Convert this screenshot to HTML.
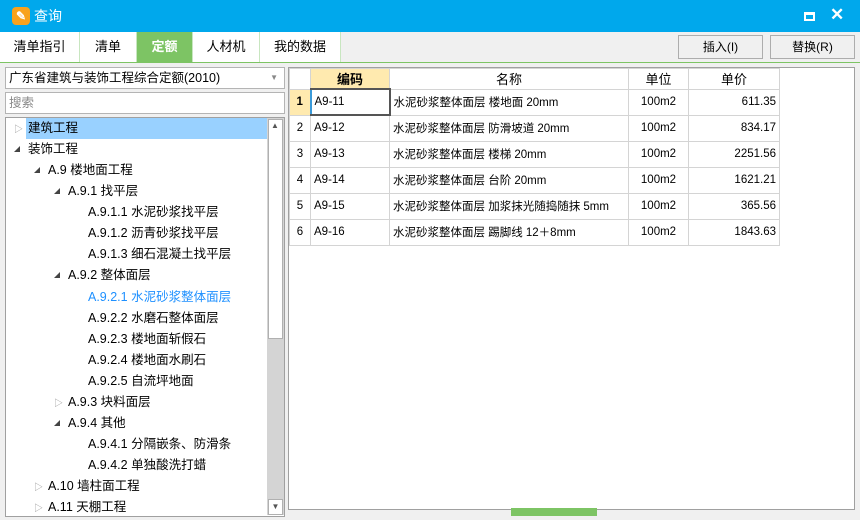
<!DOCTYPE html>
<html><head><meta charset="utf-8"><style>
*{margin:0;padding:0;box-sizing:border-box}
body{width:860px;height:520px;background:#f0f0f0;font-family:"Liberation Sans","Noto Sans CJK SC",sans-serif;font-size:12px;color:#000;position:relative;overflow:hidden}
.abs{position:absolute}
.title{left:0;top:0;width:860px;height:32px;background:#00a8ec}
.tab{top:32px;height:30px;line-height:30px;text-align:center;font-size:13px;background:#fff;border-right:1px solid #c8e6c0}
.btn{top:35px;height:24px;line-height:22px;text-align:center;border:1px solid #adadad;background:#f0f0f0;font-size:12px}
.tree div{position:absolute;height:21px;line-height:21px;font-size:12.5px;white-space:nowrap}
.tri{position:absolute;font-size:9px;color:#999}
.dtri{position:absolute;width:0;height:0;border-left:6px solid transparent;border-bottom:6px solid #444}
table{border-collapse:collapse;position:absolute;left:289px;top:68px;font-size:11.5px}
td{border:1px solid #d4d4d4;height:26px;padding:0 3px;background:#fff;white-space:nowrap}
th{border:1px solid #d4d4d4;height:20px;font-weight:normal;font-size:13px;background:#fff}
</style></head><body>
<div class="abs title"></div>
<div class="abs" style="left:12px;top:7px;width:18px;height:18px;background:#f8a21c;border-radius:4px;color:#fff;font-size:12px;line-height:18px;text-align:center;font-weight:bold">✎</div>
<div class="abs" style="left:34px;top:7px;color:#fff;font-size:14px;line-height:18px">查询</div>
<div class="abs" style="left:804px;top:12px;width:11px;height:9px;border:2px solid #fff;border-top-width:3px"></div>
<div class="abs" style="left:830px;top:5px;color:#fff;font-size:17px;font-weight:bold;line-height:20px">✕</div>

<div class="abs tab" style="left:0;width:80px">清单指引</div>
<div class="abs tab" style="left:80px;width:57px">清单</div>
<div class="abs tab" style="left:137px;width:56px;background:#7dc464;color:#fff;font-weight:bold">定额</div>
<div class="abs tab" style="left:193px;width:67px">人材机</div>
<div class="abs tab" style="left:260px;width:81px">我的数据</div>
<div class="abs" style="left:0;top:62px;width:860px;height:1px;background:#7dc464"></div>
<div class="abs btn" style="left:678px;width:85px">插入(I)</div>
<div class="abs btn" style="left:770px;width:85px">替换(R)</div>

<div class="abs" style="left:5px;top:67px;width:280px;height:22px;background:#fff;border:1px solid #b4b4b4;line-height:20px;padding-left:3px;font-size:12.5px">广东省建筑与装饰工程综合定额(2010)<span style="position:absolute;right:6px;color:#888;font-size:8px">▼</span></div>
<div class="abs" style="left:5px;top:92px;width:280px;height:22px;background:#fff;border:1px solid #b4b4b4;line-height:20px;padding-left:3px;color:#888;font-size:12.5px">搜索</div>
<div class="abs" style="left:5px;top:117px;width:280px;height:400px;background:#fff;border:1px solid #a0a0a0"></div>
<div class="abs" style="left:267px;top:118px;width:17px;height:397px;background:#d4d4d4"></div>
<div class="abs" style="left:268px;top:119px;width:15px;height:220px;background:#fff;border:1px solid #b0b0b0"></div>
<div class="abs" style="left:271px;top:121px;font-size:8px;color:#555">▲</div>
<div class="abs" style="left:268px;top:499px;width:15px;height:16px;background:#fff;border:1px solid #b0b0b0;font-size:8px;color:#555;text-align:center;line-height:14px">▼</div>
<div class="abs" style="left:26px;top:118px;width:241px;height:21px;background:#99d1ff"></div>
<div class="tree">
<span class="tri" style="left:14px;top:122px">▷</span><div style="left:28px;top:118px">建筑工程</div>
<span class="dtri" style="left:14px;top:146px"></span><div style="left:28px;top:139px">装饰工程</div>
<span class="dtri" style="left:34px;top:167px"></span><div style="left:48px;top:160px">A.9 楼地面工程</div>
<span class="dtri" style="left:54px;top:188px"></span><div style="left:68px;top:181px">A.9.1 找平层</div>
<div style="left:88px;top:202px">A.9.1.1 水泥砂浆找平层</div>
<div style="left:88px;top:223px">A.9.1.2 沥青砂浆找平层</div>
<div style="left:88px;top:244px">A.9.1.3 细石混凝土找平层</div>
<span class="dtri" style="left:54px;top:272px"></span><div style="left:68px;top:265px">A.9.2 整体面层</div>
<div style="left:88px;top:287px;color:#1e90ff">A.9.2.1 水泥砂浆整体面层</div>
<div style="left:88px;top:308px">A.9.2.2 水磨石整体面层</div>
<div style="left:88px;top:329px">A.9.2.3 楼地面斩假石</div>
<div style="left:88px;top:350px">A.9.2.4 楼地面水刷石</div>
<div style="left:88px;top:371px">A.9.2.5 自流坪地面</div>
<span class="tri" style="left:54px;top:396px">▷</span><div style="left:68px;top:392px">A.9.3 块料面层</div>
<span class="dtri" style="left:54px;top:420px"></span><div style="left:68px;top:413px">A.9.4 其他</div>
<div style="left:88px;top:434px">A.9.4.1 分隔嵌条、防滑条</div>
<div style="left:88px;top:455px">A.9.4.2 单独酸洗打蜡</div>
<span class="tri" style="left:34px;top:480px">▷</span><div style="left:48px;top:476px">A.10 墙柱面工程</div>
<span class="tri" style="left:34px;top:501px">▷</span><div style="left:48px;top:497px">A.11 天棚工程</div>
</div>

<div class="abs" style="left:288px;top:67px;width:567px;height:443px;background:#fff;border:1px solid #a0a0a0"></div>
<table>
<tr><th style="width:21px"></th><th style="width:79px;background:#ffeaaf;font-weight:bold">编码</th><th style="width:239px">名称</th><th style="width:60px">单位</th><th style="width:91px">单价</th></tr>
<tr><td style="text-align:center;background:#ffeaaf;font-weight:bold">1</td><td style="border:2px solid #555;border-left-color:#3a9ad9">A9-11</td><td>水泥砂浆整体面层 楼地面 20mm</td><td style="text-align:center">100m2</td><td style="text-align:right">611.35</td></tr>
<tr><td style="text-align:center">2</td><td>A9-12</td><td>水泥砂浆整体面层 防滑坡道 20mm</td><td style="text-align:center">100m2</td><td style="text-align:right">834.17</td></tr>
<tr><td style="text-align:center">3</td><td>A9-13</td><td>水泥砂浆整体面层 楼梯 20mm</td><td style="text-align:center">100m2</td><td style="text-align:right">2251.56</td></tr>
<tr><td style="text-align:center">4</td><td>A9-14</td><td>水泥砂浆整体面层 台阶 20mm</td><td style="text-align:center">100m2</td><td style="text-align:right">1621.21</td></tr>
<tr><td style="text-align:center">5</td><td>A9-15</td><td>水泥砂浆整体面层 加浆抹光随捣随抹 5mm</td><td style="text-align:center">100m2</td><td style="text-align:right">365.56</td></tr>
<tr><td style="text-align:center">6</td><td>A9-16</td><td>水泥砂浆整体面层 踢脚线 12＋8mm</td><td style="text-align:center">100m2</td><td style="text-align:right">1843.63</td></tr>
</table>
<div class="abs" style="left:511px;top:508px;width:86px;height:8px;background:#7dc464"></div>
</body></html>
